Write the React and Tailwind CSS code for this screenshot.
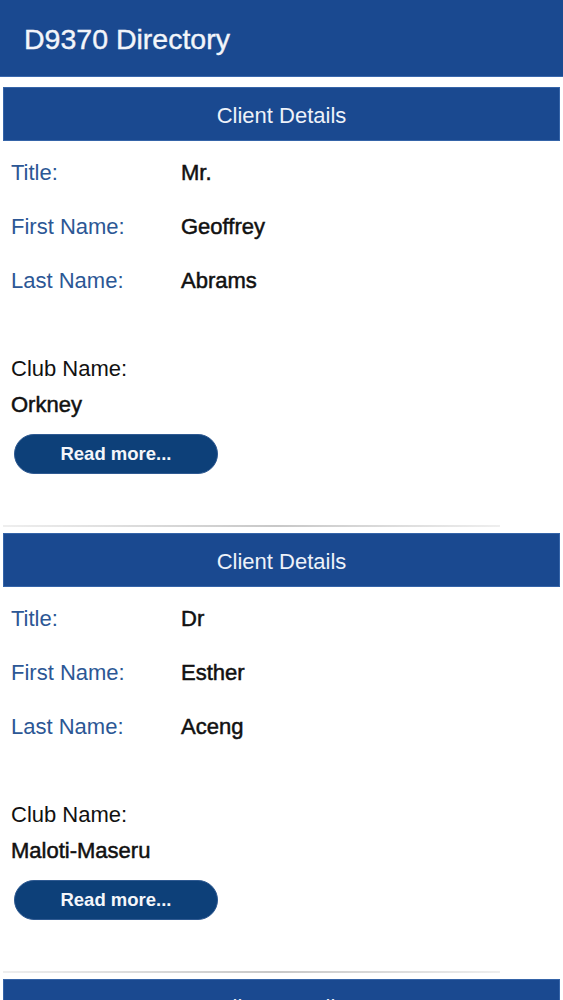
import React from "react";

const clients = [
  { title: "Mr.", first: "Geoffrey", last: "Abrams", club: "Orkney" },
  { title: "Dr", first: "Esther", last: "Aceng", club: "Maloti-Maseru" },
  { title: "Mrs", first: "Grace", last: "Adams", club: "Pretoria" },
];

function Row({ label, value }) {
  return (
    <div className="flex h-[54px] items-center pl-[8px]">
      <div className="w-[170px] text-[22px] text-[#2c5795]">{label}</div>
      <div className="text-[22px] text-[#111] [-webkit-text-stroke:0.5px_#111]">{value}</div>
    </div>
  );
}

function Card({ c }) {
  return (
    <div className="mx-[3px]">
      <div className="flex h-[54px] items-center justify-center border border-[#3564a8] bg-[#1a4990] pt-[3px] text-[22px] text-[#eef2f9]">
        Client Details
      </div>
      <div className="pt-[4px]">
        <Row label="Title:" value={c.title} />
        <Row label="First Name:" value={c.first} />
        <Row label="Last Name:" value={c.last} />
      </div>
      <div className="mt-[43px] pl-[8px]">
        <div className="flex h-[36px] items-center text-[22px] text-[#111]">Club Name:</div>
        <div className="flex h-[36px] items-center text-[22px] text-[#111] [-webkit-text-stroke:0.5px_#111]">
          {c.club}
        </div>
        <button className="mt-[12px] ml-[3px] flex h-[40px] w-[204px] items-center justify-center rounded-full border border-[#2f5a92] bg-[#0d4079] text-[18.5px] font-bold text-[#f4f6fa]">
          Read more...
        </button>
      </div>
      <div className="mt-[51px] h-[2px] w-[497px] bg-[linear-gradient(to_right,rgba(200,200,200,0.3),rgba(200,200,200,1)_55%,rgba(200,200,200,0.3))]" />
      <div className="h-[6px]" />
    </div>
  );
}

export default function App() {
  return (
    <div className="min-h-screen bg-white font-['Liberation_Sans',Arial,sans-serif]">
      <div className="flex h-[77px] items-center border-b border-[#3a68ad] bg-[#1a4990] pl-[24px] pt-[3px] text-[28.5px] text-[#f3f5fa] [-webkit-text-stroke:0.4px_#f3f5fa]">
        D9370 Directory
      </div>
      <div className="h-[10px]" />
      {clients.map((c, i) => (
        <Card key={i} c={c} />
      ))}
    </div>
  );
}
